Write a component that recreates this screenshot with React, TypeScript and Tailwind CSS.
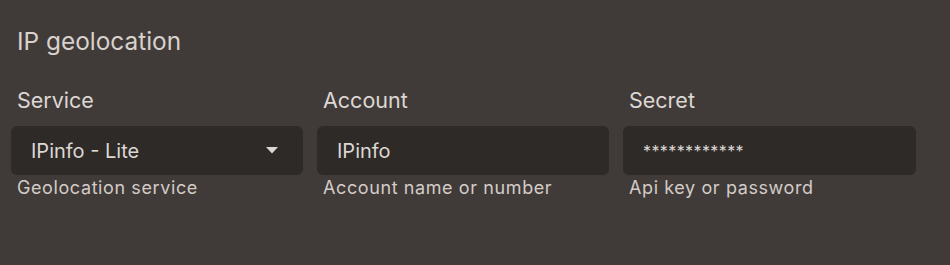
export default function App() {
  const fields = [
    { label: 'Service', value: 'IPinfo - Lite', hint: 'Geolocation service', select: true },
    { label: 'Account', value: 'IPinfo', hint: 'Account name or number' },
    { label: 'Secret', value: '************', hint: 'Api key or password', secret: true },
  ]

  return (
    <div
      className="h-[265px] w-[950px] bg-[#403b38] text-[#ddd7d3] px-[11px] pt-[25px]"
      style={{ fontFamily: 'Inter, "Noto Sans", sans-serif' }}
    >
      <h2 className="px-[6px] text-[24.4px] leading-[32px] text-[#d8d2ce]">IP geolocation</h2>

      <div className="mt-[29px] grid grid-cols-[292px_292px_293px] gap-x-[14px]">
        {fields.map((f) => (
          <div key={f.label} className="flex flex-col">
            <label className="px-[6px] text-[21.5px] leading-[28px]">{f.label}</label>
            <div className="mt-[12px] flex h-[49px] items-center justify-between rounded-[6px] bg-[#2e2a28] pl-[20px] pr-[25px]">
              <span className={f.secret ? 'text-[16px] tracking-[0.4px]' : 'text-[20px]'}>{f.value}</span>
              {f.select && (
                <svg width="12" height="7" viewBox="0 0 12 7" className="text-[#ddd7d3]">
                  <path d="M0 0h12L6 6.5z" fill="currentColor" />
                </svg>
              )}
            </div>
            <span className="px-[6px] text-[18px] leading-[26px] tracking-[0.6px] text-[#d3ccc8]">{f.hint}</span>
          </div>
        ))}
      </div>
    </div>
  )
}
